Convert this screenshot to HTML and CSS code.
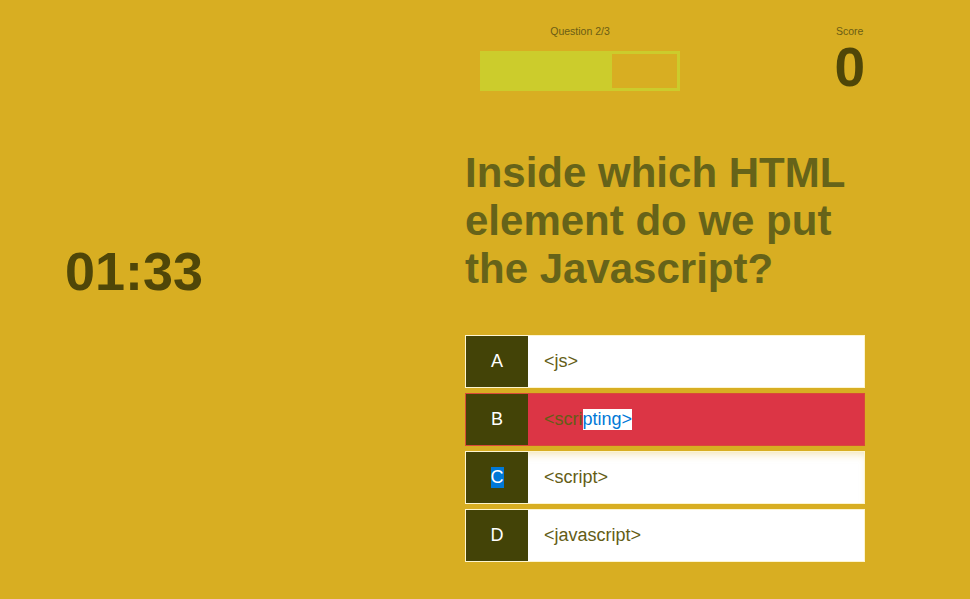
FILE: index.html
```html
<!DOCTYPE html>
<html lang="en">
<head>
<meta charset="utf-8">
<title>Quiz</title>
<link rel="stylesheet" href="styles.css">
</head>
<body>
<div class="page">
  <section class="timer-col">
    <div class="timer">01:33</div>
  </section>
  <main class="quiz">
    <header class="hud">
      <div class="progress-block">
        <div class="hud-label">Question 2/3</div>
        <div class="progress"><div class="progress-fill" style="width:66.67%"></div></div>
      </div>
      <div class="score-block">
        <div class="hud-label">Score</div>
        <div class="score">0</div>
      </div>
    </header>
    <h1 class="question">Inside which HTML element do we put the Javascript?</h1>
    <ul class="choices">
      <li class="choice"><span class="choice-letter">A</span><span class="choice-text">&lt;js&gt;</span></li>
      <li class="choice choice-wrong"><span class="choice-letter">B</span><span class="choice-text">&lt;scri<span class="sel-inv">pting&gt;</span></span></li>
      <li class="choice choice-hover"><span class="choice-letter"><span class="sel">C</span></span><span class="choice-text">&lt;script&gt;</span></li>
      <li class="choice"><span class="choice-letter">D</span><span class="choice-text">&lt;javascript&gt;</span></li>
    </ul>
  </main>
</div>
</body>
</html>
```

FILE: styles.css
```css
* { box-sizing: border-box; }

html, body {
  margin: 0;
  padding: 0;
}

body {
  background: #d8ae22;
  font-family: "Liberation Sans", Arial, sans-serif;
  width: 970px;
  height: 599px;
  overflow: hidden;
}

.page {
  display: flex;
  height: 599px;
}

.timer-col {
  width: 465px;
  padding-left: 65px;
  padding-top: 244px;
}

.timer {
  font-size: 54px;
  line-height: 1;
  font-weight: 700;
  color: #4f4608;
}

.quiz {
  width: 400px;
  padding-top: 24px;
}

.hud {
  display: flex;
  justify-content: space-between;
  align-items: flex-start;
}

.hud-label {
  font-size: 10.5px;
  line-height: 14px;
  color: #6b5d14;
}

.progress-block {
  margin-left: 15px;
  width: 200px;
  text-align: center;
}

.progress {
  margin-top: 13px;
  height: 40px;
  border: 3px solid #cccc2c;
  display: flex;
}

.progress-fill {
  background: #cccc2c;
  height: 100%;
}

.score-block {
  text-align: center;
}

.score {
  margin-top: 7px;
  font-size: 55px;
  line-height: 0.8;
  font-weight: 700;
  color: #4f4608;
}

.question {
  margin: 58px 0 0;
  font-size: 42px;
  line-height: 48px;
  font-weight: 700;
  color: #666319;
}

.choices {
  list-style: none;
  margin: 42px 0 0;
  padding: 0;
  display: flex;
  flex-direction: column;
  gap: 5px;
}

.choice {
  display: flex;
  height: 53px;
  background: #ffffff;
  border: 1px solid #fdf5cf;
}

.choice-letter {
  width: 62px;
  flex: none;
  background: #434307;
  color: #ffffff;
  font-size: 18px;
  display: flex;
  align-items: center;
  justify-content: center;
}

.choice-text {
  display: flex;
  align-items: center;
  padding-left: 16px;
  font-size: 18px;
  color: #645d16;
}

.choice-wrong {
  background: #dc3545;
  border-color: #d9493a;
}

.choice-hover {
  box-shadow: inset 0 6px 8px -4px rgba(216, 174, 34, 0.35);
}

.sel-inv {
  background: #ffffff;
  color: #0078d7;
}

.sel {
  background: #0078d7;
  color: #ffffff;
}
```
